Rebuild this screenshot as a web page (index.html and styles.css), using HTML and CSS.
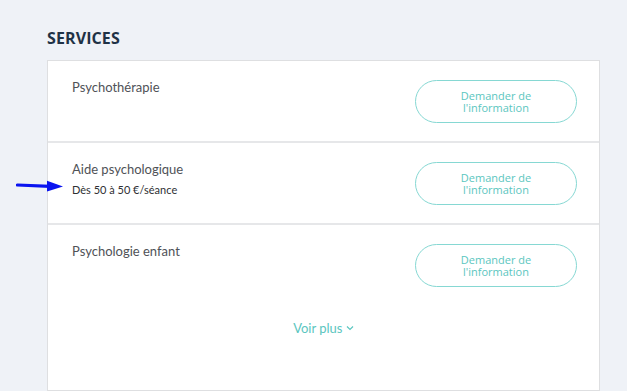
FILE: index.html
```html
<!DOCTYPE html>
<html lang="fr">
<head>
  <meta charset="UTF-8" />
  <meta name="viewport" content="width=device-width, initial-scale=1.0"/>
  <title>Services</title>
  <link rel="stylesheet" href="styles.css">
</head>
<body>
  <div class="services">
    <h2 class="title">SERVICES</h2>
    <div class="card">
      <div class="row">
        <div class="info">
          <div class="name">Psychothérapie</div>
        </div>
        <button class="ask">Demander de<br>l'information</button>
      </div>
      <div class="row">
        <div class="info">
          <div class="name">Aide psychologique</div>
          <div class="price">Dès 50 à 50 €/séance</div>
        </div>
        <button class="ask">Demander de<br>l'information</button>
      </div>
      <div class="row last">
        <div class="info">
          <div class="name">Psychologie enfant</div>
        </div>
        <button class="ask">Demander de<br>l'information</button>
      </div>
      <div class="more">
        <a href="#">Voir plus
          <svg width="8" height="6" viewBox="0 0 8 6"><path d="M1 1.5 L4 4.5 L7 1.5" fill="none" stroke="#5bc6c0" stroke-width="1.2"/></svg>
        </a>
      </div>
    </div>
  </div>

  <svg class="arrow" width="50" height="12" viewBox="0 0 50 12">
    <path d="M1.5 5 L34 6.3" stroke="#0a14f0" stroke-width="3.2" fill="none" stroke-linecap="round"/>
    <path d="M31 0.8 L47 6.6 L31 11.4 Z" fill="#0a14f0"/>
  </svg>
</body>
</html>
```

FILE: styles.css
```css
* { margin: 0; padding: 0; box-sizing: border-box; }
body, html {
  font-family: 'Lato', 'Open Sans', sans-serif;
  background-color: #eff2f7;
  color: #555;
}
.services {
  padding: 29px 27px 0 47px;
}
.title {
  font-family: 'Open Sans', sans-serif;
  font-size: 16px;
  font-weight: 700;
  color: #1f3246;
  letter-spacing: 0.1px;
  line-height: 18px;
  margin-bottom: 13px;
}
.card {
  background: #fff;
  border: 1px solid #dedfe1;
  height: 331px;
}
.row {
  display: flex;
  justify-content: space-between;
  align-items: flex-start;
  padding: 19px 22px 18px 24px;
  border-bottom: 2px solid #e6e7e9;
}
.row.last { border-bottom: none; }
.name {
  font-size: 13px;
  color: #4f5257;
  line-height: 14px;
}
.price {
  font-size: 11px;
  color: #2e2f33;
  margin-top: 7px;
}
.ask {
  width: 162px;
  height: 43px;
  border: 1px solid #86d8d3;
  border-radius: 22px;
  background: #fff;
  color: #5bc6c0;
  font-family: 'Open Sans', sans-serif;
  font-size: 11px;
  line-height: 12px;
  cursor: pointer;
}
.more {
  text-align: center;
  padding-top: 12px;
}
.more a {
  color: #5bc6c0;
  font-size: 13px;
  text-decoration: none;
}
.more svg { vertical-align: 2px; }
.arrow {
  position: absolute;
  left: 16px;
  top: 180px;
}
```
